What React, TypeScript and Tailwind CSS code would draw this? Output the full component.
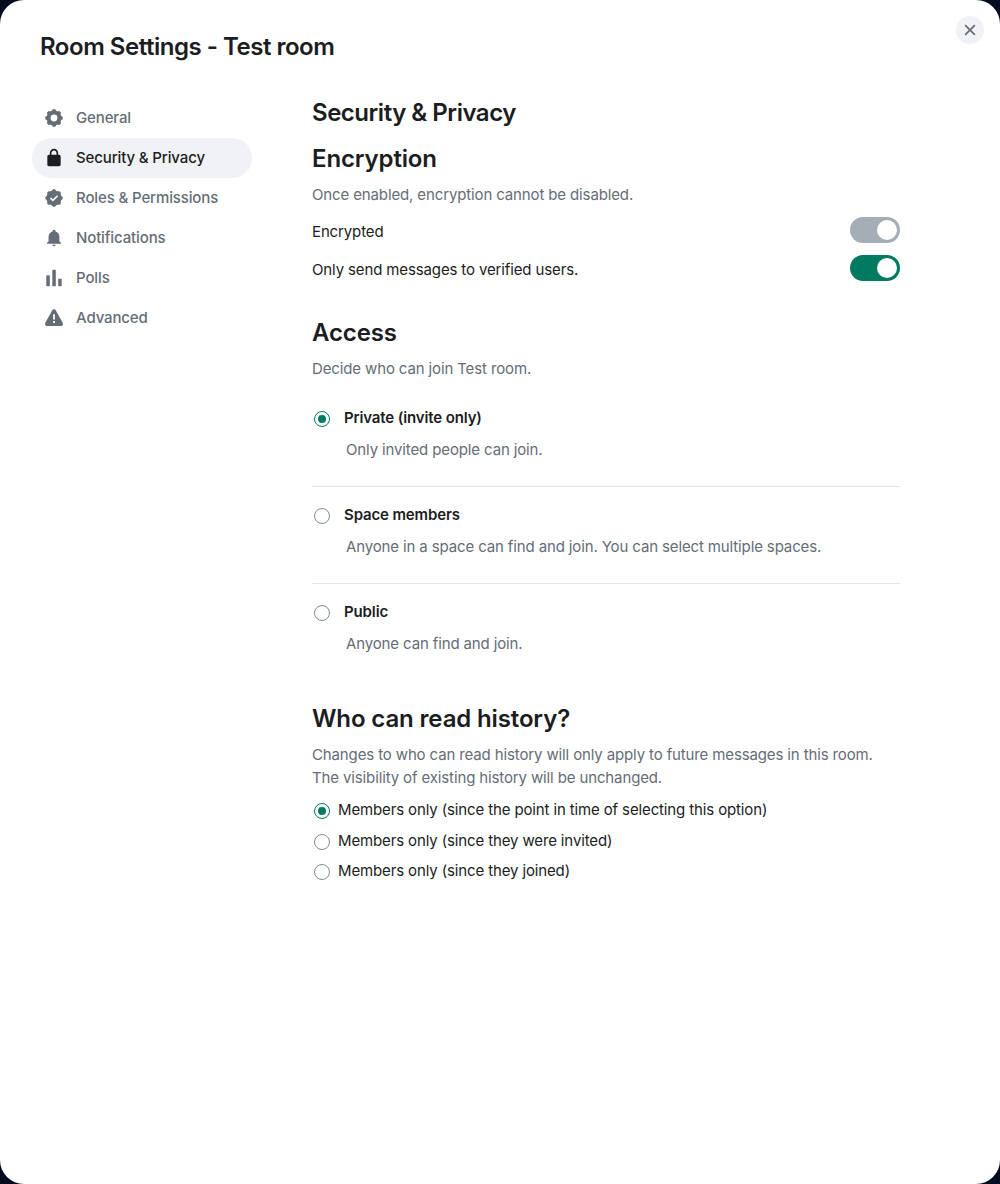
import React, { useState } from "react";

const teeth = [0, 45, 90, 135, 180, 225, 270, 315];

function Gear() {
  return (
    <svg width="20" height="20" viewBox="0 0 20 20" fill="none">
      <circle cx="10" cy="10" r="5.4" stroke="currentColor" strokeWidth="4" />
      {teeth.map((a) => (
        <path key={a} d="M7.5 4 8.2 2.1Q8.5 1.3 9.3 1.3H10.7Q11.5 1.3 11.8 2.1L12.5 4Z" fill="currentColor" transform={`rotate(${a} 10 10)`} />
      ))}
    </svg>
  );
}

function Lock() {
  return (
    <svg width="20" height="20" viewBox="0 0 24 24" fill="currentColor">
      <path d="M6 22q-.825 0-1.412-.587A1.93 1.93 0 0 1 4 20V10q0-.825.588-1.412A1.93 1.93 0 0 1 6 8h1V6q0-2.075 1.463-3.537Q9.926 1 12 1t3.537 1.463T17 6v2h1q.825 0 1.413.588Q20 9.175 20 10v10q0 .825-.587 1.413A1.93 1.93 0 0 1 18 22zM9 8h6V6q0-1.25-.875-2.125A2.9 2.9 0 0 0 12 3q-1.25 0-2.125.875A2.9 2.9 0 0 0 9 6z" />
    </svg>
  );
}

function Verified() {
  return (
    <svg width="20" height="20" viewBox="0 0 20 20" fill="currentColor">
      <rect x="3.2" y="3.2" width="13.6" height="13.6" rx="1.9" />
      <rect x="3.2" y="3.2" width="13.6" height="13.6" rx="1.9" transform="rotate(45 10 10)" />
      <path d="m6.5 10 2.4 2.4 4.7-4.7" fill="none" stroke="white" strokeWidth="1.5" />
    </svg>
  );
}

function Bell() {
  return (
    <svg width="20" height="20" viewBox="0 0 24 24" fill="currentColor">
      <path d="M4.3 19q-.8 0-.8-.75 0-.35.3-.6L5.5 16v-5.5q0-2.4 1.35-4.1T10.3 4.1V3.7q0-.7.5-1.2T12 2t1.2.5.5 1.2v.4q2.1.6 3.45 2.3T18.5 10.5V16l1.7 1.65q.3.25.3.6 0 .75-.8.75zM12 22a1.93 1.93 0 0 1-1.412-.587A1.93 1.93 0 0 1 10 20h4q0 .825-.587 1.413A1.93 1.93 0 0 1 12 22" />
    </svg>
  );
}

function Polls() {
  return (
    <svg width="20" height="20" viewBox="0 0 20 20" fill="currentColor">
      <rect x="2.3" y="7.3" width="3.5" height="11" rx=".7" />
      <rect x="8.3" y="1.7" width="3.5" height="16.6" rx=".7" />
      <rect x="14.2" y="10.7" width="3.5" height="7.6" rx=".7" />
    </svg>
  );
}

function Warning() {
  return (
    <svg width="20" height="20" viewBox="0 0 20 20">
      <path d="M8.4 2q.55-.8 1.6-.8t1.6.8l7.1 12.8q.7 1.3-.1 2.5-.5.7-1.3.7H2.7q-.8 0-1.3-.7-.8-1.2-.1-2.5Z" fill="currentColor" />
      <path d="M9.1 6.2h1.8v5.3H9.1zM9.1 13.1h1.8v1.8H9.1z" fill="white" />
    </svg>
  );
}

const tabs = [
  { label: "General", icon: <Gear /> },
  { label: "Security & Privacy", icon: <Lock /> },
  { label: "Roles & Permissions", icon: <Verified /> },
  { label: "Notifications", icon: <Bell /> },
  { label: "Polls", icon: <Polls /> },
  { label: "Advanced", icon: <Warning /> },
];

const access = [
  { title: "Private (invite only)", text: "Only invited people can join." },
  { title: "Space members", text: "Anyone in a space can find and join. You can select multiple spaces." },
  { title: "Public", text: "Anyone can find and join." },
];

const history = [
  { label: "Members only (since the point in time of selecting this option)", row: "h-[31px]" },
  { label: "Members only (since they were invited)", row: "h-[30px]" },
  { label: "Members only (since they joined)", row: "h-[30px]" },
];

function Radio({ on }: { on: boolean }) {
  return (
    <span className={`flex size-4 shrink-0 items-center justify-center rounded-full border ${on ? "border-[#007a61]" : "border-[#818a95]"}`}>
      {on && <span className="size-2 rounded-full bg-[#007a61]" />}
    </span>
  );
}

function Toggle({ color }: { color: string }) {
  return (
    <span className={`flex h-[26px] w-[50px] items-center justify-end rounded-full p-[3px] ${color}`}>
      <span className="size-5 rounded-full bg-white" />
    </span>
  );
}

function Heading({ children, tight }: { children: React.ReactNode; tight?: boolean }) {
  return <h2 className={`text-2xl leading-[30px] font-semibold ${tight ? "tracking-[-0.48px]" : "tracking-[-0.135px]"}`}>{children}</h2>;
}

export default function App() {
  const [tab, setTab] = useState(1);
  const [join, setJoin] = useState(0);
  const [reader, setReader] = useState(0);
  return (
    <div className="h-[1184px] w-[1000px] bg-[#020d20]">
      <div className="relative h-full rounded-[24px] bg-white px-8 pt-8 font-['Inter',sans-serif] text-[15px] leading-[23px] tracking-[-0.13px] text-[#1b1d22]">
        <button aria-label="Close" className="absolute top-4 right-4 flex size-7 items-center justify-center rounded-full bg-[#f0f2f5] text-[#656d77]">
          <svg width="20" height="20" viewBox="0 0 20 20" fill="none" stroke="currentColor" strokeWidth="1.7" strokeLinecap="round">
            <path d="m5.6 5.6 8.8 8.8m0-8.8-8.8 8.8" />
          </svg>
        </button>
        <h1 className="pl-2 text-2xl leading-[30px] font-semibold tracking-[-0.48px]">Room Settings - Test room</h1>
        <div className="mt-9 flex">
          <nav className="w-[220px]">
            {tabs.map((t, i) => (
              <button
                key={t.label}
                onClick={() => setTab(i)}
                className={`flex h-10 w-full items-center gap-3 rounded-full pl-3 leading-[22px] font-medium ${i === tab ? "bg-[#f0f2f5] text-[#1b1d22]" : "text-[#656d77]"}`}
              >
                {t.icon}
                <span>{t.label}</span>
              </button>
            ))}
          </nav>
          <main className="ml-[60px] w-[588px]">
            <Heading tight>Security &amp; Privacy</Heading>
            <section className="mt-4">
              <Heading>Encryption</Heading>
              <p className="mt-[9px] text-[#656d77]">Once enabled, encryption cannot be disabled.</p>
              <div className="mt-[11px] flex h-[26px] items-center justify-between">
                <span className="mt-0.5">Encrypted</span>
                <Toggle color="bg-[#a5adb7]" />
              </div>
              <div className="mt-3 flex h-[26px] items-center justify-between">
                <span className="mt-0.5">Only send messages to verified users.</span>
                <Toggle color="bg-[#007a61]" />
              </div>
            </section>
            <section className="mt-[37px]">
              <Heading>Access</Heading>
              <p className="mt-[9px] text-[#656d77]">Decide who can join Test room.</p>
              <div className="mt-[10px]">
                {access.map((a, i) => (
                  <div key={a.title} onClick={() => setJoin(i)} className={`h-[97px] pt-4 ${i < 2 ? "border-b border-[#e1e6ec]" : ""}`}>
                    <div className="flex h-6 items-center pl-0.5 font-semibold">
                      <span className="mt-0.5">
                        <Radio on={join === i} />
                      </span>
                      <span className="-mt-0.5 ml-[14px]">{a.title}</span>
                    </div>
                    <p className="mt-2 pl-[34px] text-[#656d77]">{a.text}</p>
                  </div>
                ))}
              </div>
            </section>
            <section className="mt-[23px]">
              <Heading>Who can read history?</Heading>
              <p className="mt-[9px] text-[#656d77]">
                Changes to who can read history will only apply to future messages in this room.
                <br />
                The visibility of existing history will be unchanged.
              </p>
              <div className="mt-[9px]">
                {history.map((h, i) => (
                  <div key={h.label} onClick={() => setReader(i)} className={`flex items-start pl-0.5 ${h.row}`}>
                    <span className="mt-[5px]">
                      <Radio on={reader === i} />
                    </span>
                    <span className="ml-2">{h.label}</span>
                  </div>
                ))}
              </div>
            </section>
          </main>
        </div>
      </div>
    </div>
  );
}
